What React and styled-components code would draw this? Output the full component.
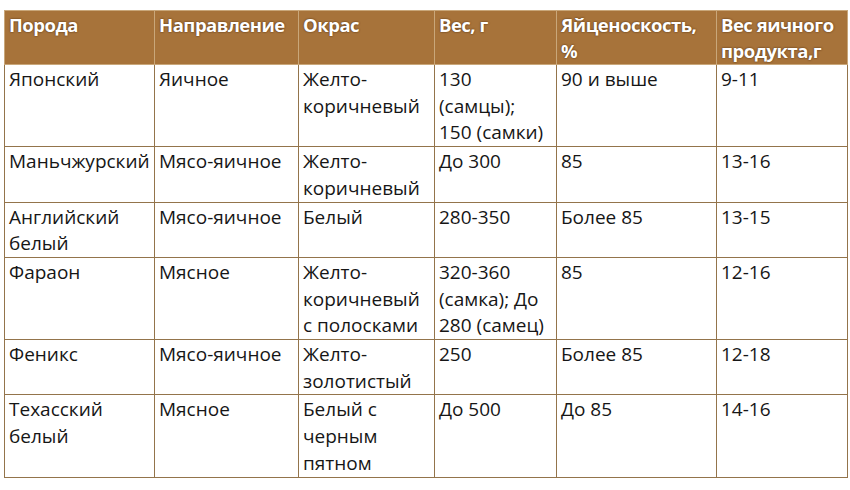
import React from 'react';
import styled, { createGlobalStyle } from 'styled-components';

const GlobalStyle = createGlobalStyle`
  body {
    margin: 0;
    background: #ffffff;
    font-family: 'Open Sans', 'DejaVu Sans', sans-serif;
  }
`;

const Page = styled.div`
  padding: 10px 3px 0 4px;
`;

const Table = styled.table`
  border-collapse: collapse;
  table-layout: fixed;
  width: 843px;
  border: 1.5px solid #8c6d44;
  font-size: 19px;
  color: #161616;
`;

const HeadCell = styled.th`
  background: #a7733a;
  color: #ffffff;
  font-weight: 700;
  font-size: 18.5px;
  letter-spacing: -0.5px;
  text-align: left;
  vertical-align: top;
  line-height: 26px;
  padding: 1px 2px 0 4px;
  border: 1.5px solid #c9a77a;
  text-shadow: 0 0 2px rgba(60, 30, 5, 0.9);
`;

const Cell = styled.td`
  vertical-align: top;
  line-height: 26.7px;
  padding: 1px 6px 0 4px;
  border: 1.5px solid #93744b;
`;

const columns = [
  { title: 'Порода', width: 150 },
  { title: 'Направление', width: 144 },
  { title: 'Окрас', width: 136 },
  { title: 'Вес, г', width: 122 },
  { title: 'Яйценоскость, %', width: 160 },
  { title: 'Вес яичного продукта,г', width: 131 },
];

const rows = [
  ['Японский', 'Яичное', 'Желто-коричневый', '130 (самцы); 150 (самки)', '90 и выше', '9-11'],
  ['Маньчжурский', 'Мясо-яичное', 'Желто-коричневый', 'До 300', '85', '13-16'],
  ['Английский белый', 'Мясо-яичное', 'Белый', '280-350', 'Более 85', '13-15'],
  ['Фараон', 'Мясное', 'Желто-коричневый с полосками', '320-360 (самка); До 280 (самец)', '85', '12-16'],
  ['Феникс', 'Мясо-яичное', 'Желто-золотистый', '250', 'Более 85', '12-18'],
  ['Техасский белый', 'Мясное', 'Белый с черным пятном', 'До 500', 'До 85', '14-16'],
];

const App = () => (
  <>
    <GlobalStyle />
    <Page>
      <Table>
        <colgroup>
          {columns.map((col) => (
            <col key={col.title} style={{ width: `${col.width}px` }} />
          ))}
        </colgroup>
        <thead>
          <tr>
            {columns.map((col) => (
              <HeadCell key={col.title}>{col.title}</HeadCell>
            ))}
          </tr>
        </thead>
        <tbody>
          {rows.map((row) => (
            <tr key={row[0]}>
              {row.map((value, i) => (
                <Cell key={i}>{value}</Cell>
              ))}
            </tr>
          ))}
        </tbody>
      </Table>
    </Page>
  </>
);

export default App;
